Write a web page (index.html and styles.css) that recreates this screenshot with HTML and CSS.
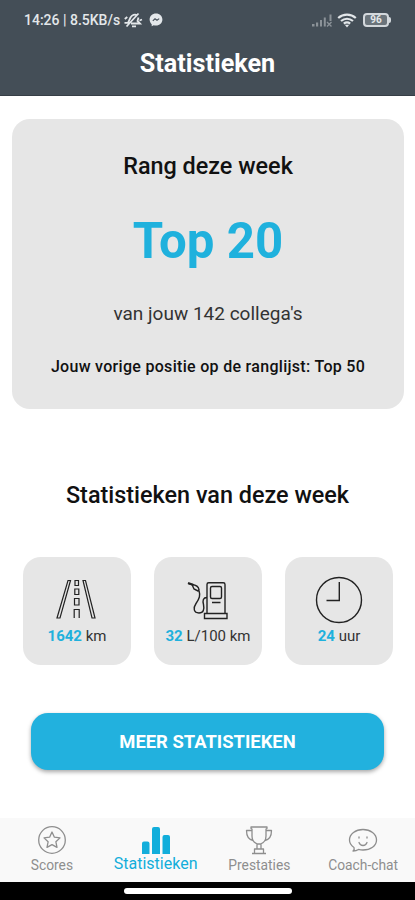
FILE: index.html
```html
<!DOCTYPE html>
<html lang="nl">
<head>
    <meta charset="UTF-8">
    <meta name="viewport" content="width=device-width, initial-scale=1.0">
    <title>Statistieken</title>
    <link rel="stylesheet" href="styles.css">
</head>
<body>
    <header>
        <div class="status-bar">
            <span class="status-text">14:26 | 8.5KB/s</span>
            <svg class="mute" width="20" height="16" viewBox="0 0 20 16" fill="none" stroke="currentColor" stroke-width="1.8">
                <path d="M1.500 10.800h3.500L7.500 5.500C9 2.800 12 2 14 3.200M15.500 5.500l-1 3.500 2.500 2.500H8M9 14.300h4M3.500 14.500L15.500 1.500M1.800 7l2.500-2M16.500 8.500l2.500-1"/>
            </svg>
            <svg class="messenger" width="14" height="14" viewBox="0 0 14 14">
                <path fill="currentColor" d="M7 .6C3.300.6.600 3.200.6 6.600c0 1.900.8 3.500 2.100 4.600v2.100l2-1c.7.200 1.500.3 2.300.3 3.700 0 6.400-2.600 6.400-6S10.700.6 7 .6z"/>
                <path fill="none" stroke="#444e57" stroke-width="1.100" d="M3.800 7.800l2.200-2 2 1.500L10.200 5.600"/>
            </svg>
            <svg class="signal" width="20" height="14" viewBox="0 0 20 14" fill="#8b9298">
                <path d="M0 11h2.500v2.500H0zM4 9.500h2.200v4H4zM8 7h2v6.500H8zM11.800 4.500h2v9h-2zM17.500 1.500h2V8h-2z"/>
                <path d="M15 9l4.500 4.500M19.500 9L15 13.500" stroke="#8b9298" stroke-width="1.400"/>
            </svg>
            <svg class="wifi" width="20" height="15" viewBox="0 0 20 15" fill="none" stroke="currentColor" stroke-width="2.200">
                <path d="M1.200 5C6.300.5 13.700.5 18.800 5M4 8c3.600-3 8.400-3 12 0M6.800 10.600c2-1.500 4.400-1.500 6.400 0"/>
                <path d="M7.800 11.800h4.400L10 14.500z" fill="currentColor" stroke="none"/>
            </svg>
            <span class="battery">96</span>
        </div>
        <h1>Statistieken</h1>
    </header>

    <main>
        <section class="rank-card">
            <h2>Rang deze week</h2>
            <div class="rank">Top 20</div>
            <p class="colleagues">van jouw 142 collega's</p>
            <p class="previous">Jouw vorige positie op de ranglijst: Top 50</p>
        </section>

        <h2 class="week-title">Statistieken van deze week</h2>

        <section class="tiles">
            <div class="tile">
                <svg width="48" height="48" viewBox="0 0 48 48" fill="none" stroke="#222" stroke-width="1.200">
                    <path d="M15 4.500h2.500L7 42H4zM30 4.500h2.500L42 42h-3z"/>
                    <path d="M22 4.500h3.500v5H22zM21.800 13h4v5.500h-4zM21.500 22.500h4.500V29h-4.500zM21.200 42v-8.500h5V42"/>
                </svg>
                <div><b>1642</b> km</div>
            </div>
            <div class="tile">
                <svg width="48" height="48" viewBox="0 0 48 48" fill="none" stroke="#222" stroke-width="1.400">
                    <path d="M23 37.500v-29Q23 6.800 24.700 6.800H39.300Q41 6.800 41 8.500v29M20.500 37.500h22.500v5H20.500z"/>
                    <rect x="26.500" y="10.500" width="11" height="12" rx="1.500"/>
                    <path d="M28 26.500h8.500M23 21.500c-4 0-4.500 3-3.500 7 1 5 0 8.500-4.500 8.500-5.500 0-6-5-3-9.500 3.500-5 4.500-8 3-13"/>
                    <path d="M4.500 7.500L8 8.500l2 4.500 4 2 1-1.500C14.500 10.500 12 9 8 8.500"/>
                    <path d="M4 7l5.500 2" stroke-width="2.200"/>
                </svg>
                <div><b>32</b> L/100 km</div>
            </div>
            <div class="tile">
                <svg width="48" height="48" viewBox="0 0 48 48" fill="none" stroke="#222" stroke-width="1.400">
                    <circle cx="24" cy="24" r="22.500"/>
                    <path d="M24.300 6v18.500H11.500"/>
                </svg>
                <div><b>24</b> uur</div>
            </div>
        </section>

        <button>MEER STATISTIEKEN</button>
    </main>

    <nav>
        <a class="tab">
            <svg width="30" height="30" viewBox="0 0 30 30" fill="none" stroke="currentColor" stroke-width="1.300" stroke-linejoin="round">
                <circle cx="15" cy="15" r="13.300"/>
                <path d="M15 7l2.400 5.200 5.600.7-4.100 3.900 1.100 5.600-5-2.800-5 2.800 1.100-5.600L7 12.900l5.600-.7z"/>
            </svg>
            <span>Scores</span>
        </a>
        <a class="tab active">
            <svg width="30" height="29" viewBox="0 0 30 29" fill="currentColor">
                <path d="M1 18.500Q1 16.500 3 16.500H6.500Q8.500 16.500 8.500 18.500V29H1zM11 4Q11 2 13 2H17Q19 2 19 4V29H11zM21.500 12Q21.500 10 23.500 10H27Q29 10 29 12V29H21.500z"/>
            </svg>
            <span>Statistieken</span>
        </a>
        <a class="tab">
            <svg width="30" height="30" viewBox="0 0 30 30" fill="none" stroke="currentColor" stroke-width="1.300" stroke-linejoin="round">
                <path d="M7 2h16v1.500l-1 .5v7c0 4-2.500 7-5.500 8h-3C10.500 18 8 15 8 11V4L7 3.500zM7.500 5.500H2.500C2.500 11 4.500 14.500 9 15.500M22.500 5.500h5c0 5.500-2 9-6.500 10M13 19v5h4v-5M10.500 28v-4h9v4M8 28.500h14"/>
            </svg>
            <span>Prestaties</span>
        </a>
        <a class="tab">
            <svg width="30" height="30" viewBox="0 0 30 30" fill="none" stroke="currentColor" stroke-width="1.300" stroke-linejoin="round" stroke-linecap="round">
                <path d="M6 22.500C3 20.500 1.500 18 1.500 15 1.500 9 7.500 4.500 15 4.500S28.500 9 28.500 15 22.500 25 15 25c-1.700 0-3-.2-4.500-.6-1.500 1.100-3.500 1.600-5.500 1.600 1.200-.9 1.500-2.200 1-3.500z"/>
                <path d="M11 12v1M19 12v1M11 17.500c1.500 4 6.500 4 8 0"/>
            </svg>
            <span>Coach-chat</span>
        </a>
    </nav>
    <div class="home-bar"><div class="home-pill"></div></div>
</body>
</html>
```
FILE: styles.css
```css
* {
    box-sizing: border-box;
}
body {
    margin: 0;
    height: 900px;
    display: flex;
    flex-direction: column;
    font-family: Roboto, sans-serif;
    text-align: center;
    background-color: white;
    color: #111;
}
h1, h2, p {
    margin: 0;
}
header {
    height: 96px;
    background-color: #444e57;
    border-bottom: 1px solid #363e46;
    color: white;
}
.status-bar {
    display: flex;
    align-items: center;
    height: 40px;
    padding: 0 26px 0 24px;
    color: #e3e7ea;
}
.status-text {
    width: 97px;
    font-size: 14px;
    font-weight: 500;
    text-align: left;
    white-space: nowrap;
}
.mute {
    margin-left: 2px;
}
.messenger {
    margin-left: 6px;
}
.signal {
    margin-left: auto;
}
.wifi {
    margin: 0 6px 0 5px;
}
.battery {
    position: relative;
    width: 26px;
    height: 14px;
    border: 2px solid #d3d8dc;
    border-radius: 4px;
    background-color: #6b747b;
    font-size: 10px;
    font-weight: 700;
    line-height: 10px;
}
.battery::after {
    content: "";
    position: absolute;
    right: -4px;
    top: 2px;
    width: 2px;
    height: 6px;
    border-radius: 0 2px 2px 0;
    background-color: #d3d8dc;
}
h1 {
    font-size: 25.2px;
    font-weight: 700;
    line-height: 48px;
}
main {
    flex: 1;
}
.rank-card {
    height: 290px;
    margin: 23px 11px 0 12px;
    padding-top: 32px;
    border-radius: 18px;
    background-color: #e6e6e6;
}
h2 {
    font-size: 23.4px;
    font-weight: 500;
    line-height: 30px;
}
.rank {
    margin-top: 30px;
    font-size: 49.2px;
    font-weight: 700;
    line-height: 60px;
    color: #1fb1dd;
}
.colleagues {
    margin-top: 31px;
    font-size: 19px;
    line-height: 24px;
    color: #333;
}
.previous {
    margin-top: 30px;
    font-size: 16px;
    font-weight: 500;
    line-height: 22px;
    letter-spacing: 0.3px;
}
.week-title {
    margin-top: 71px;
}
.tiles {
    display: flex;
    gap: 23px;
    margin: 47px 22px 0 23px;
}
.tile {
    flex: 1;
    height: 108px;
    padding-top: 19px;
    border-radius: 18px;
    background-color: #e6e6e6;
    font-size: 15px;
    line-height: 20px;
    white-space: nowrap;
    color: #333;
}
.tile svg {
    display: block;
    margin: 0 auto 2px;
}
.tile b {
    color: #1fb1dd;
}
button {
    display: block;
    width: 353px;
    height: 57px;
    margin: 48px 0 0 31px;
    padding: 0;
    border: none;
    border-radius: 17px;
    background-color: #22b1de;
    box-shadow: 0 2px 4px rgba(0,0,0,0.35);
    font-family: inherit;
    font-size: 18.4px;
    font-weight: 700;
    color: white;
}
nav {
    display: flex;
    height: 64px;
    padding-top: 7px;
    background-color: #f9f9f9;
}
.tab {
    display: flex;
    flex: 1;
    flex-direction: column;
    align-items: center;
    font-size: 13.8px;
    line-height: 20px;
    color: #8e8e8e;
}
.tab.active {
    font-size: 16px;
    color: #12aedb;
}
.home-bar {
    display: flex;
    justify-content: center;
    height: 18px;
    padding-top: 6px;
    background-color: black;
}
.home-pill {
    width: 168px;
    height: 6px;
    border-radius: 3px;
    background-color: white;
}
```
